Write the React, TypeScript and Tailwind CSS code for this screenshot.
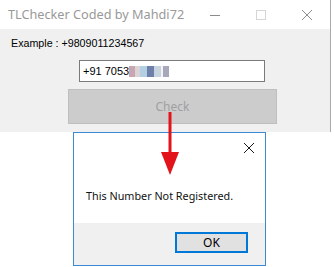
export default function App() {
  return (
    <div className="relative h-[267px] w-[334px] overflow-hidden bg-white">
      {/* main window */}
      <div className="flex w-[331px] flex-col border-r border-[#a9a9a9]">
        <div className="flex h-[29px] items-center bg-white pl-[8px]">
          <span className="text-[12.7px] leading-none text-[#999999] [font-family:'Noto_Sans',sans-serif]">
            TLChecker Coded by Mahdi72
          </span>
          <div className="ml-auto flex h-full items-center">
            <div className="flex w-[46px] justify-center">
              <svg width="10" height="10" viewBox="0 0 10 10">
                <path d="M0 5.5h10" stroke="#8c8c8c" strokeWidth="1" />
              </svg>
            </div>
            <div className="flex w-[46px] justify-center">
              <svg width="10" height="10" viewBox="0 0 10 10">
                <rect x="0.5" y="0.5" width="9" height="9" fill="none" stroke="#d6d6d6" strokeWidth="1" />
              </svg>
            </div>
            <div className="flex w-[46px] justify-center">
              <svg width="10" height="10" viewBox="0 0 10 10">
                <path d="M0 0L10 10M10 0L0 10" stroke="#8c8c8c" strokeWidth="1" />
              </svg>
            </div>
          </div>
        </div>
        <div className="flex h-[103px] flex-col bg-[#f0f0f0] [font-family:'Liberation_Sans',Arial,sans-serif]">
          <div className="ml-[11px] mt-[8px] text-[10.7px] leading-[13px] text-black">
            Example : +9809011234567
          </div>
          <div className="ml-[79px] mt-[10px] flex h-[22px] w-[186px] items-center border border-[#7a7a7a] bg-white pl-[3px]">
            <span className="text-[11px] leading-none text-black">+91 7053</span>
            <span className="flex h-[11px]">
              <span className="w-[6px] bg-[#c9a7ae]" />
              <span className="w-[5px] bg-[#dcd3d8]" />
              <span className="w-[7px] bg-[#b3cfe2]" />
              <span className="w-[7px] bg-[#6d80a9]" />
              <span className="w-[7px] bg-[#c8d4de]" />
              <span className="w-[2px] bg-[#f4f4f6]" />
              <span className="w-[6px] bg-[#a9a8ba]" />
            </span>
          </div>
          <div className="ml-[68px] mt-[7px] flex h-[35px] w-[209px] items-center justify-center border border-[#bfbfbf] bg-[#cccccc]">
            <span className="text-[12px] leading-none text-[#a0a0a0] [font-family:'Noto_Sans',sans-serif]">
              Check
            </span>
          </div>
        </div>
      </div>

      {/* message box */}
      <div className="absolute left-[73px] top-[132px] flex h-[134px] w-[193px] flex-col border border-[#3b8ad3] bg-white [font-family:'Noto_Sans',sans-serif]">
        <div className="flex h-[90px] flex-col">
          <div className="flex justify-end pr-[11px] pt-[10px]">
            <svg width="10" height="10" viewBox="0 0 10 10">
              <path d="M0 0L10 10M10 0L0 10" stroke="#1a1a1a" strokeWidth="1" />
            </svg>
          </div>
          <div className="ml-[12px] mt-[36px] text-[10.8px] leading-[14px] text-[#111]">
            This Number Not Registered.
          </div>
        </div>
        <div className="flex flex-1 justify-end bg-[#f0f0f0] pr-[17px] pt-[9px]">
          <div className="flex h-[21px] w-[73px] items-center justify-center border-2 border-[#0078d7] bg-[#e1e1e1]">
            <span className="text-[12px] leading-none text-black">OK</span>
          </div>
        </div>
      </div>

      {/* annotation arrow */}
      <svg className="absolute left-[160px] top-[112px]" width="20" height="64" viewBox="0 0 20 64">
        <path d="M10 0V42" stroke="#e3131b" strokeWidth="3" />
        <path d="M1 40L19 40L10 63Z" fill="#e3131b" />
      </svg>
    </div>
  );
}
